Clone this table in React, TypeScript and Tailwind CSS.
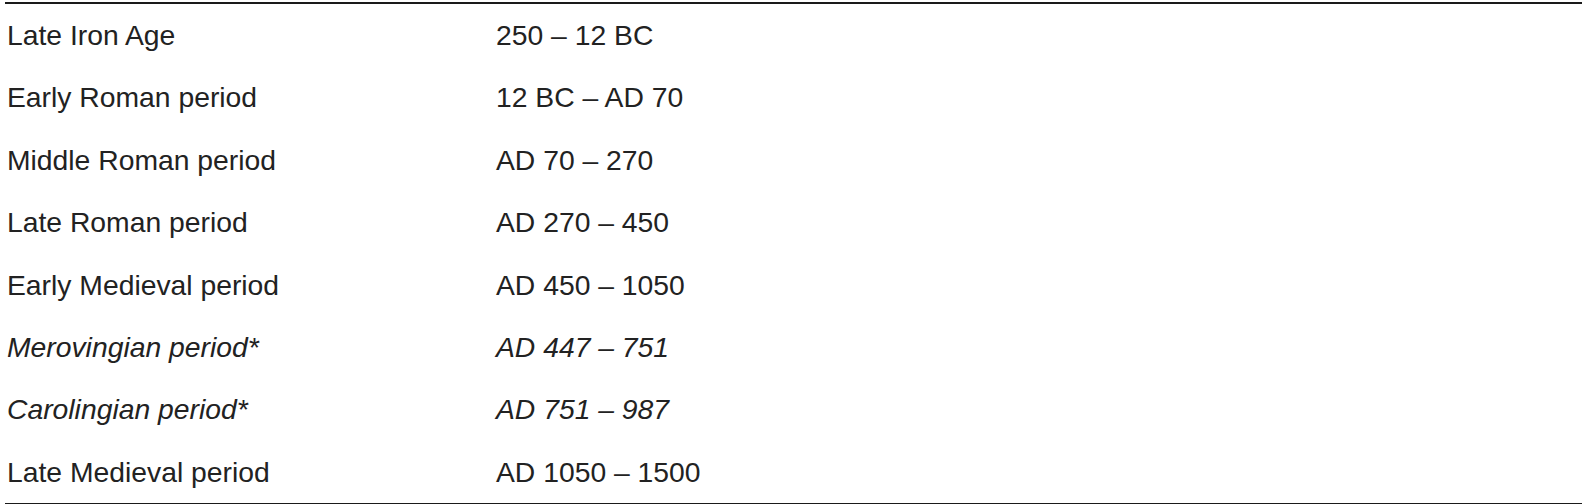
const rows: { period: string; dates: string; italic?: boolean }[] = [
  { period: "Late Iron Age", dates: "250 – 12 BC" },
  { period: "Early Roman period", dates: "12 BC – AD 70" },
  { period: "Middle Roman period", dates: "AD 70 – 270" },
  { period: "Late Roman period", dates: "AD 270 – 450" },
  { period: "Early Medieval period", dates: "AD 450 – 1050" },
  { period: "Merovingian period*", dates: "AD 447 – 751", italic: true },
  { period: "Carolingian period*", dates: "AD 751 – 987", italic: true },
  { period: "Late Medieval period", dates: "AD 1050 – 1500" },
];

export default function App() {
  return (
    <div className="bg-white w-[1591px] h-[504px] pt-[2px] pl-[5px] pr-[9px] text-[#222222] font-['Liberation_Sans',Arial,sans-serif]">
      <div className="border-t-2 border-b border-[#1a1a1a]">
        {rows.map((r) => (
          <div
            key={r.period}
            className={`flex h-[62.4px] items-center text-[28.3px] leading-[62.4px] pl-[2px] ${r.italic ? "italic" : ""}`}
          >
            <div className="w-[489px] shrink-0">{r.period}</div>
            <div>{r.dates}</div>
          </div>
        ))}
      </div>
    </div>
  );
}
